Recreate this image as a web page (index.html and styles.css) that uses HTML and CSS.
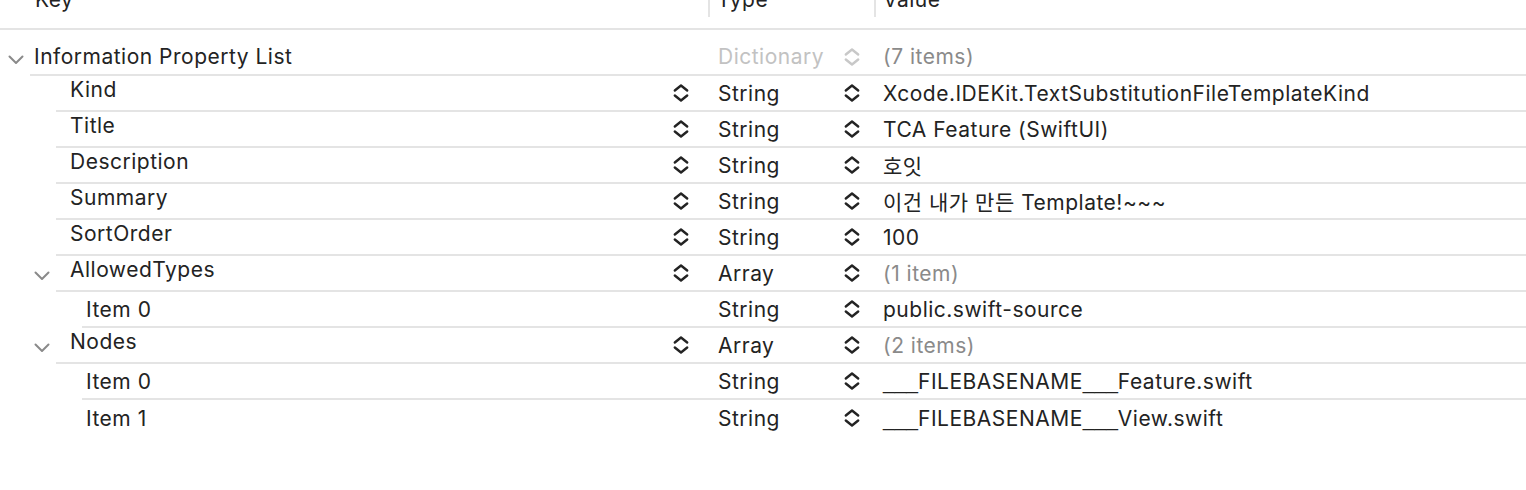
FILE: index.html
```html
<!DOCTYPE html>
<html>
<head>
<meta charset="utf-8">
<link rel="stylesheet" href="styles.css">
</head>
<body>
<div class="plist">
  <div class="header">
    <div class="hcell hkey"><span>Key</span></div>
    <div class="hcell hsep"><span>Type</span></div>
    <div class="hcell hsep"><span>Value</span></div>
  </div>

  <div class="rows">
    <div class="row lvl0">
      <div class="gutter"><svg class="disclosure" viewBox="0 0 16 10"><path d="M1.5 1.5 L8 8 L14.5 1.5"/></svg></div>
      <div class="body">
        <div class="key pad0"><span class="ktext">Information Property List</span></div>
        <div class="type faint"><span>Dictionary</span><svg class="stepper" viewBox="0 0 16 22"><path d="M1.8 8.5 L8 3.5 L14.2 8.5 M1.8 13.5 L8 18.5 L14.2 13.5"/></svg></div>
        <div class="value dim">(7 items)</div>
      </div>
    </div>

    <div class="row lvl1">
      <div class="gutter"></div>
      <div class="body">
        <div class="key pad1"><span class="ktext edit">Kind</span><svg class="stepper" viewBox="0 0 16 22"><path d="M1.8 8.5 L8 3.5 L14.2 8.5 M1.8 13.5 L8 18.5 L14.2 13.5"/></svg></div>
        <div class="type"><span>String</span><svg class="stepper" viewBox="0 0 16 22"><path d="M1.8 8.5 L8 3.5 L14.2 8.5 M1.8 13.5 L8 18.5 L14.2 13.5"/></svg></div>
        <div class="value">Xcode.IDEKit.TextSubstitutionFileTemplateKind</div>
      </div>
    </div>

    <div class="row lvl1">
      <div class="gutter"></div>
      <div class="body">
        <div class="key pad1"><span class="ktext edit">Title</span><svg class="stepper" viewBox="0 0 16 22"><path d="M1.8 8.5 L8 3.5 L14.2 8.5 M1.8 13.5 L8 18.5 L14.2 13.5"/></svg></div>
        <div class="type"><span>String</span><svg class="stepper" viewBox="0 0 16 22"><path d="M1.8 8.5 L8 3.5 L14.2 8.5 M1.8 13.5 L8 18.5 L14.2 13.5"/></svg></div>
        <div class="value">TCA Feature (SwiftUI)</div>
      </div>
    </div>

    <div class="row lvl1">
      <div class="gutter"></div>
      <div class="body">
        <div class="key pad1"><span class="ktext edit">Description</span><svg class="stepper" viewBox="0 0 16 22"><path d="M1.8 8.5 L8 3.5 L14.2 8.5 M1.8 13.5 L8 18.5 L14.2 13.5"/></svg></div>
        <div class="type"><span>String</span><svg class="stepper" viewBox="0 0 16 22"><path d="M1.8 8.5 L8 3.5 L14.2 8.5 M1.8 13.5 L8 18.5 L14.2 13.5"/></svg></div>
        <div class="value">호잇</div>
      </div>
    </div>

    <div class="row lvl1">
      <div class="gutter"></div>
      <div class="body">
        <div class="key pad1"><span class="ktext edit">Summary</span><svg class="stepper" viewBox="0 0 16 22"><path d="M1.8 8.5 L8 3.5 L14.2 8.5 M1.8 13.5 L8 18.5 L14.2 13.5"/></svg></div>
        <div class="type"><span>String</span><svg class="stepper" viewBox="0 0 16 22"><path d="M1.8 8.5 L8 3.5 L14.2 8.5 M1.8 13.5 L8 18.5 L14.2 13.5"/></svg></div>
        <div class="value">이건 내가 만든 Template!~~~</div>
      </div>
    </div>

    <div class="row lvl1">
      <div class="gutter"></div>
      <div class="body">
        <div class="key pad1"><span class="ktext edit">SortOrder</span><svg class="stepper" viewBox="0 0 16 22"><path d="M1.8 8.5 L8 3.5 L14.2 8.5 M1.8 13.5 L8 18.5 L14.2 13.5"/></svg></div>
        <div class="type"><span>String</span><svg class="stepper" viewBox="0 0 16 22"><path d="M1.8 8.5 L8 3.5 L14.2 8.5 M1.8 13.5 L8 18.5 L14.2 13.5"/></svg></div>
        <div class="value">100</div>
      </div>
    </div>

    <div class="row lvl1">
      <div class="gutter"><svg class="disclosure" viewBox="0 0 16 10"><path d="M1.5 1.5 L8 8 L14.5 1.5"/></svg></div>
      <div class="body">
        <div class="key pad1"><span class="ktext edit">AllowedTypes</span><svg class="stepper" viewBox="0 0 16 22"><path d="M1.8 8.5 L8 3.5 L14.2 8.5 M1.8 13.5 L8 18.5 L14.2 13.5"/></svg></div>
        <div class="type"><span>Array</span><svg class="stepper" viewBox="0 0 16 22"><path d="M1.8 8.5 L8 3.5 L14.2 8.5 M1.8 13.5 L8 18.5 L14.2 13.5"/></svg></div>
        <div class="value dim">(1 item)</div>
      </div>
    </div>

    <div class="row lvl2">
      <div class="gutter"></div>
      <div class="body">
        <div class="key pad2"><span class="ktext">Item 0</span></div>
        <div class="type"><span>String</span><svg class="stepper" viewBox="0 0 16 22"><path d="M1.8 8.5 L8 3.5 L14.2 8.5 M1.8 13.5 L8 18.5 L14.2 13.5"/></svg></div>
        <div class="value">public.swift-source</div>
      </div>
    </div>

    <div class="row lvl1">
      <div class="gutter"><svg class="disclosure" viewBox="0 0 16 10"><path d="M1.5 1.5 L8 8 L14.5 1.5"/></svg></div>
      <div class="body">
        <div class="key pad1"><span class="ktext edit">Nodes</span><svg class="stepper" viewBox="0 0 16 22"><path d="M1.8 8.5 L8 3.5 L14.2 8.5 M1.8 13.5 L8 18.5 L14.2 13.5"/></svg></div>
        <div class="type"><span>Array</span><svg class="stepper" viewBox="0 0 16 22"><path d="M1.8 8.5 L8 3.5 L14.2 8.5 M1.8 13.5 L8 18.5 L14.2 13.5"/></svg></div>
        <div class="value dim">(2 items)</div>
      </div>
    </div>

    <div class="row lvl2">
      <div class="gutter"></div>
      <div class="body">
        <div class="key pad2"><span class="ktext">Item 0</span></div>
        <div class="type"><span>String</span><svg class="stepper" viewBox="0 0 16 22"><path d="M1.8 8.5 L8 3.5 L14.2 8.5 M1.8 13.5 L8 18.5 L14.2 13.5"/></svg></div>
        <div class="value"><span><span class="us">___</span>FILEBASENAME<span class="us">___</span>Feature.swift</span></div>
      </div>
    </div>

    <div class="row lvl2">
      <div class="gutter"></div>
      <div class="body">
        <div class="key pad2"><span class="ktext">Item 1</span></div>
        <div class="type"><span>String</span><svg class="stepper" viewBox="0 0 16 22"><path d="M1.8 8.5 L8 3.5 L14.2 8.5 M1.8 13.5 L8 18.5 L14.2 13.5"/></svg></div>
        <div class="value"><span><span class="us">___</span>FILEBASENAME<span class="us">___</span>View.swift</span></div>
      </div>
    </div>
  </div>
</div>
</body>
</html>
```

FILE: styles.css
```css
html, body {
  margin: 0;
  padding: 0;
  background: #ffffff;
}

body {
  width: 1526px;
  height: 490px;
  overflow: hidden;
  font-family: Inter, "Noto Sans CJK KR", "Liberation Sans", sans-serif;
  font-size: 21px;
  letter-spacing: 0.5px;
  color: #232323;
}

.plist {
  display: flex;
  flex-direction: column;
}

/* header */
.header {
  display: grid;
  grid-template-columns: 708px 166px 1fr;
  height: 28px;
  border-bottom: 2px solid #e4e4e4;
  margin-bottom: 10px;
}

.hcell {
  height: 17px;
  line-height: 21px;
  overflow: visible;
}

.hcell span {
  display: block;
  margin-top: -11px;
}

.hkey {
  padding-left: 35px;
}

.hsep {
  border-left: 2px solid #e4e4e4;
  padding-left: 7px;
}

/* rows */
.rows {
  display: flex;
  flex-direction: column;
}

.row {
  display: flex;
  height: 36px;
}

.gutter {
  display: flex;
  align-items: center;
  justify-content: flex-end;
  padding-right: 6px;
  box-sizing: border-box;
  flex: none;
}

.lvl0 .gutter { width: 30px; }
.lvl1 .gutter { width: 56px; }
.lvl2 .gutter { width: 82px; }

.body {
  flex: 1;
  display: grid;
  grid-template-columns: 1fr 166px 652px;
  border-bottom: 2px solid #e4e4e4;
}

.row:last-child .body {
  border-bottom: none;
}

.key,
.type,
.value {
  display: flex;
  align-items: center;
  white-space: nowrap;
}

.key {
  justify-content: space-between;
  padding-right: 19px;
}

.pad0 { padding-left: 4px; }
.pad1 { padding-left: 14px; }
.pad2 { padding-left: 4px; }

.ktext.edit {
  margin-bottom: 8px;
}

.row.lvl0 .ktext {
  margin-bottom: 2px;
}

.type {
  justify-content: space-between;
  padding-left: 10px;
  padding-right: 14px;
}

.value {
  padding-left: 9px;
}

.us {
  font-family: "Liberation Sans", sans-serif;
  letter-spacing: 0;
}

.dim {
  color: #8a8a8a;
}

.faint {
  color: #c2c2c2;
}

.row.lvl0 .value {
  margin-bottom: 2px;
}

.row.lvl0 .type span {
  margin-bottom: 2px;
}

/* icons */
.disclosure {
  width: 16px;
  height: 10px;
  fill: none;
  stroke: #8a8a8a;
  stroke-width: 2;
  stroke-linecap: round;
  stroke-linejoin: round;
  margin-top: 3px;
}

.stepper {
  width: 16px;
  height: 22px;
  fill: none;
  stroke: #232323;
  stroke-width: 2.4;
  stroke-linecap: round;
  stroke-linejoin: round;
  flex: none;
}

.faint .stepper {
  stroke: #c8c8c8;
}
```
